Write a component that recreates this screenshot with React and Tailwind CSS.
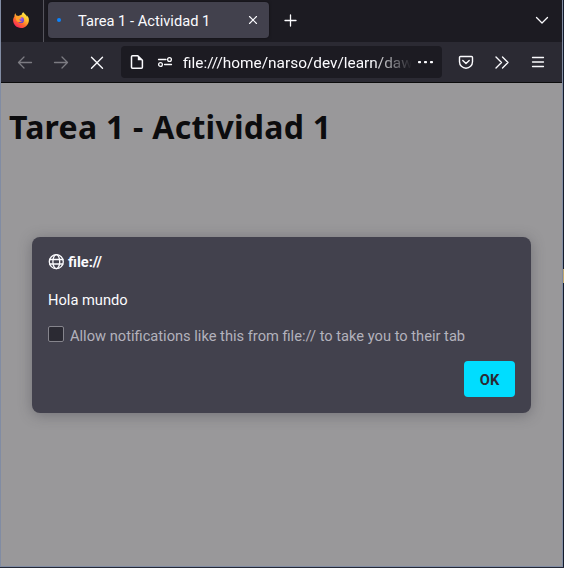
import React from "react";

const stroke = { fill: "none", stroke: "currentColor", strokeLinecap: "round", strokeLinejoin: "round" };

function FirefoxLogo() {
  return (
    <svg className="h-4 w-4" viewBox="0 0 16 16">
      <defs>
        <linearGradient id="flame" x1="0.85" y1="0.05" x2="0.2" y2="0.95">
          <stop offset="0" stopColor="#fff04a" />
          <stop offset="0.35" stopColor="#ffbd2e" />
          <stop offset="0.65" stopColor="#ff6a2d" />
          <stop offset="1" stopColor="#f6215f" />
        </linearGradient>
        <radialGradient id="globe" cx="0.5" cy="0.3" r="0.75">
          <stop offset="0" stopColor="#a35cf0" />
          <stop offset="1" stopColor="#5a3fb8" />
        </radialGradient>
      </defs>
      <path d="M15.4 5.6c-.4-.9-1.1-1.8-1.7-2.1.3.6.5 1.2.6 1.7C13.3 3 11.7 2 10.4.3 9.2 1 8.7 2.2 8.5 3.1c-1 0-2 .3-2.8.8-.7-.2-1.3-.2-1.9-.1C3.1 3.2 2.6 2.2 2.5 1.2 1.5 2 1.4 3.4 1.5 4.3.6 5.5.1 7 .1 8.3.1 12.6 3.6 16 8 16c4.4 0 7.9-3.5 7.9-7.8 0-.9-.1-1.8-.5-2.6Z" fill="url(#flame)" />
      <circle cx="8" cy="8" r="3.1" fill="url(#globe)" />
      <path d="M2.8 4.4c2-.7 3.9-.1 4.7.7l1.3.6c-.3 1-2.1 1-2.4 1.9-.2 1 1.2 1.9 2.7 1.5-.8 1.3-4.3 1.5-5.5-.4-.8-1.3-1-3-.8-4.3Z" fill="#ffa02a" />
    </svg>
  );
}

function TabBar() {
  return (
    <div className="flex h-[42px] items-center bg-[#1c1b22]">
      <div className="flex h-full w-[43px] items-center border-r border-[#55545c] pl-3 pb-0.5">
        <FirefoxLogo />
      </div>
      <div className="mb-0.5 ml-1 flex h-9 w-[221px] items-center rounded bg-[#42414d] pl-[9px] shadow-[0_0_3px_rgba(0,0,0,0.5)]">
        <span className="h-1 w-1 rounded-full bg-[#0a84ff]" />
        <span className="mt-px ml-[17px] w-[167px] whitespace-nowrap text-[14.67px] leading-5">Tarea 1 - Actividad 1</span>
        <svg className="h-4 w-4" viewBox="0 0 16 16" {...stroke} strokeWidth="1.1">
          <path d="M4.5 4.5l7 7M11.5 4.5l-7 7" />
        </svg>
      </div>
      <svg className="mb-0.5 ml-[13px] h-4 w-4" viewBox="0 0 16 16" {...stroke} strokeWidth="1.3">
        <path d="M3 8.5h11M8.5 3v11" />
      </svg>
      <svg className="mb-0.5 ml-auto mr-3 h-4 w-4" viewBox="0 0 16 16" {...stroke} strokeWidth="1.3">
        <path d="M2.5 5.5l5.5 5.5 5.5-5.5" />
      </svg>
    </div>
  );
}

function AddressBar() {
  return (
    <div className="ml-4 flex h-8 w-[321px] items-center rounded bg-[#1c1b22] pl-2">
      <svg className="h-4 w-4 shrink-0" viewBox="0 0 16 16" {...stroke} strokeWidth="1.5">
        <path d="M3.5 1.7h5.3l4.6 4.6v7a1 1 0 0 1-1 1H3.5a1 1 0 0 1-1-1V2.7a1 1 0 0 1 1-1Z" />
        <path d="M8.8 1.7v4.6h4.6Z" fill="currentColor" stroke="none" />
      </svg>
      <svg className="ml-3 h-4 w-4 shrink-0" viewBox="0 0 16 16" {...stroke} strokeWidth="1.3">
        <path d="M1.5 5.5h7.5M7.5 10.5h7" />
        <circle cx="12.5" cy="5.5" r="1.9" />
        <circle cx="3.5" cy="10.5" r="1.9" />
      </svg>
      <div className="ml-2.5 mt-0.5 w-[229px] shrink-0 whitespace-nowrap text-[15.4px] leading-5 [mask-image:linear-gradient(to_left,transparent,black_40px)]">
        file:///home/narso/dev/learn/daw
      </div>
      <svg className="ml-[5px] h-4 w-4 shrink-0" viewBox="0 0 16 16" fill="currentColor">
        <rect x="1" y="7" width="3" height="2.3" rx="0.8" />
        <rect x="7" y="7" width="3" height="2.3" rx="0.8" />
        <rect x="13" y="7" width="3" height="2.3" rx="0.8" />
      </svg>
    </div>
  );
}

function Toolbar() {
  return (
    <div className="flex h-[41px] items-center border-b border-[#0c0c0d] bg-[#2b2a33]">
      <svg className="ml-4 h-4 w-4 text-[#7c7b82]" viewBox="0 0 16 16" {...stroke} strokeWidth="1.3">
        <path d="M14.5 8.5h-13M7 3L1.5 8.5 7 14" />
      </svg>
      <svg className="ml-5 h-4 w-4 text-[#7c7b82]" viewBox="0 0 16 16" {...stroke} strokeWidth="1.3">
        <path d="M1.5 8.5h13M9 3l5.5 5.5L9 14" />
      </svg>
      <svg className="ml-5 h-4 w-4" viewBox="0 0 16 16" {...stroke} strokeWidth="1.4">
        <path d="M2.5 3.2l11 11M13.5 3.2l-11 11" />
      </svg>
      <AddressBar />
      <svg className="ml-4 h-4 w-4" viewBox="0 0 16 16" {...stroke} strokeWidth="1.4">
        <path d="M2.5 2.5h11a1 1 0 0 1 1 1v4.2a6.5 6.5 0 0 1-13 0V3.5a1 1 0 0 1 1-1Z" />
        <path d="M4.8 6.5L8 9.6l3.2-3.1" />
      </svg>
      <svg className="ml-5 h-4 w-4" viewBox="0 0 16 16" {...stroke} strokeWidth="1.4">
        <path d="M2 3l5.5 5.5L2 14M8.5 3L14 8.5 8.5 14" />
      </svg>
      <svg className="ml-5 h-4 w-4" viewBox="0 0 16 16" {...stroke} strokeWidth="1.3">
        <path d="M2.5 3.5h11M2.5 8h11M2.5 12.5h11" />
      </svg>
    </div>
  );
}

function AlertDialog() {
  return (
    <div className="ml-[31px] mt-[90px] flex h-[176px] w-[499px] flex-col rounded-lg bg-[#42414d] px-4 pb-4 pt-[15px] text-[14.67px] leading-5 shadow-[0_2px_14px_rgba(58,57,68,0.4)]">
      <div className="flex items-center gap-1 font-bold">
        <svg className="h-4 w-4" viewBox="0 0 16 16" {...stroke} strokeWidth="1.3">
          <circle cx="8.3" cy="7.7" r="7" />
          <ellipse cx="8.3" cy="7.7" rx="3.4" ry="7" />
          <path d="M1.8 5.5h13M1.8 10h13" />
        </svg>
        <span>file://</span>
      </div>
      <div className="mt-[18px]">Hola mundo</div>
      <label className="mt-4 flex items-center gap-1.5 text-[#b3b2bc]">
        <span className="mb-1 h-4 w-4 rounded-[2px] border border-[#85848c] bg-[#2b2a33]" />
        <span>Allow notifications like this from file:// to take you to their tab</span>
      </label>
      <button className="mt-auto h-9 w-[51px] self-end rounded bg-[#00ddff] pt-px font-bold text-[#2b2a33]">OK</button>
    </div>
  );
}

export default function App() {
  return (
    <div className="flex h-[568px] w-[564px] overflow-hidden border-b border-[#252936] font-['Roboto',sans-serif] text-[#fbfbfe]">
      <div className="flex h-[567px] w-[563px] shrink-0 flex-col border-x border-b border-[#818ca3]">
        <TabBar />
        <Toolbar />
        <main className="flex-1 bg-[#99989a]">
          <h1 className="ml-2 pt-6 font-['Noto_Sans',sans-serif] text-[32px] font-bold leading-10 tracking-[0.27px] text-[#0c0c0e]">
            Tarea 1 - Actividad 1
          </h1>
          <AlertDialog />
        </main>
      </div>
      <div className="w-px bg-[#141c2c] pt-[269px]">
        <div className="h-[14px] bg-[#bfa66c]" />
      </div>
    </div>
  );
}
